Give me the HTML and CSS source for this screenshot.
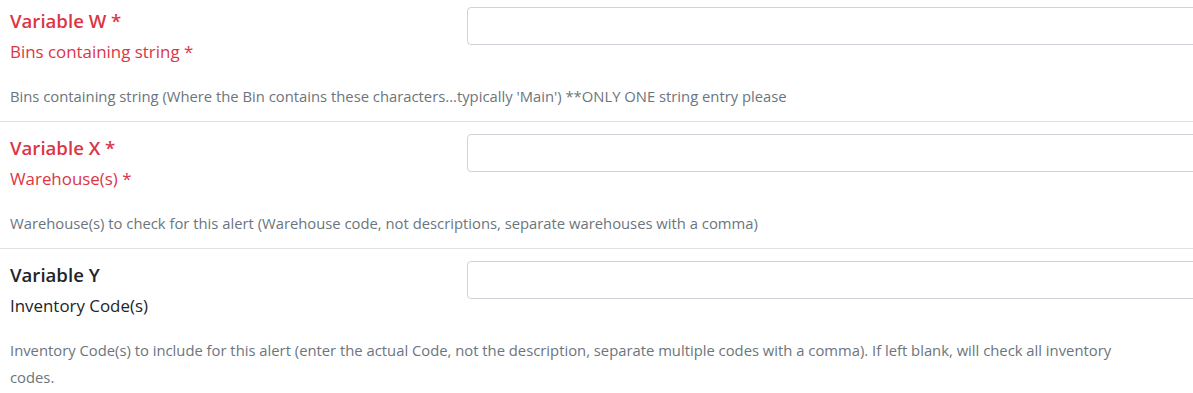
FILE: index.html
```html
<!DOCTYPE html>
<html lang="en">
<head>
    <meta charset="UTF-8">
    <meta name="viewport" content="width=device-width, initial-scale=1.0">
    <title>Alert Variables</title>
    <link rel="stylesheet" href="styles.css">
</head>
<body>
    <div class="variables">
        <div class="var_row">
            <div class="var_label">
                <h3 class="var_title required">Variable W *</h3>
                <label class="var_name required" for="var_w">Bins containing string *</label>
            </div>
            <div class="var_input">
                <input id="var_w" type="text">
            </div>
            <p class="var_help">Bins containing string (Where the Bin contains these characters...typically 'Main') **ONLY ONE string entry please</p>
        </div>

        <div class="var_row">
            <div class="var_label">
                <h3 class="var_title required">Variable X *</h3>
                <label class="var_name required" for="var_x">Warehouse(s) *</label>
            </div>
            <div class="var_input">
                <input id="var_x" type="text">
            </div>
            <p class="var_help">Warehouse(s) to check for this alert (Warehouse code, not descriptions, separate warehouses with a comma)</p>
        </div>

        <div class="var_row">
            <div class="var_label">
                <h3 class="var_title">Variable Y</h3>
                <label class="var_name" for="var_y">Inventory Code(s)</label>
            </div>
            <div class="var_input">
                <input id="var_y" type="text">
            </div>
            <p class="var_help">Inventory Code(s) to include for this alert (enter the actual Code, not the description, separate multiple codes with a comma). If left blank, will check all inventory codes.</p>
        </div>
    </div>
</body>
</html>
```

FILE: styles.css
```css
html, body {
    margin: 0;
    overflow: hidden;
}
body {
    font-family: "Open Sans", "Noto Sans", sans-serif;
    color: #212529;
    background-color: #fff;
}

/* 全体 */
.variables {
    width: 1260px;
    margin-top: -5px;
}

.var_row {
    display: grid;
    grid-template-columns: 457px 1fr;
    padding: 12px 0 11px 10px;
    border-bottom: 1px solid #dee2e6;
}

.var_title {
    margin: 0;
    font-size: 18.6px;
    line-height: 27px;
    font-weight: 600;
}
.var_name {
    display: block;
    margin-top: 6px;
    font-size: 16.9px;
    line-height: 24px;
}
.required {
    color: #dc3545;
}

.var_input input {
    box-sizing: border-box;
    width: 100%;
    height: 38px;
    border: 1px solid #ced4da;
    border-radius: 4px;
    background-color: #fff;
}

.var_help {
    grid-column: 1 / 3;
    max-width: 1130px;
    margin: 19px 0 0;
    font-size: 14.8px;
    line-height: 27px;
    color: #6c757d;
}
```
